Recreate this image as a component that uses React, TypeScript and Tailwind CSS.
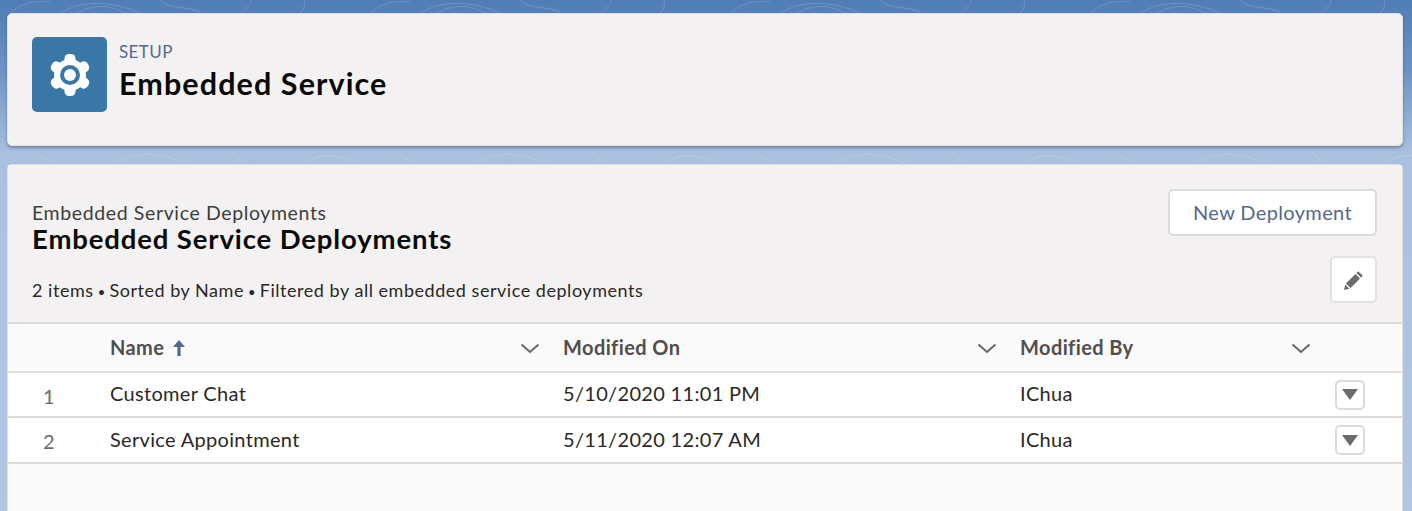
const font = "[font-family:Lato,'Noto_Sans',sans-serif]";

function Chevron() {
  return (
    <svg width="20" height="12" viewBox="0 0 20 12" fill="none" className="block">
      <path d="M1.5 2.5 L10 10 L18.5 2.5" stroke="#666" strokeWidth="2" />
    </svg>
  );
}

function HeaderCell({ label, arrow, width, chevronGap }: { label: string; arrow?: boolean; width: string; chevronGap: string }) {
  return (
    <div className={`flex items-center ${width}`}>
      <span className="-mt-[2px] text-[20px] font-bold tracking-[0.4px] text-[#514f4d]">{label}</span>
      {arrow && (
        <svg width="14" height="18" viewBox="0 0 14 18" className="ml-[8px]">
          <path d="M7 1 L13 8 L8.6 8 L8.6 17 L5.4 17 L5.4 8 L1 8 Z" fill="#54698d" />
        </svg>
      )}
      <span className={chevronGap}><Chevron /></span>
    </div>
  );
}

function Row({ n, name, date, height, shift }: { n: number; name: string; date: string; height: string; shift: string }) {
  return (
    <div className={`flex ${height} items-center border-b-2 border-[#dddbda] bg-white text-[20px] tracking-[0.32px] text-[#2b2826]`}>
      <span className="w-[102px] pl-[35px] pt-[2px] text-[#6b6b6b]">{n}</span>
      <span className={`${shift} w-[453px]`}>{name}</span>
      <span className={`${shift} w-[457px]`}>{date}</span>
      <span className={`${shift} w-[315px]`}>IChua</span>
      <button className="flex h-[30px] w-[30px] items-center justify-center rounded-[5px] border-2 border-[#dddbda] bg-white">
        <svg width="16" height="11" viewBox="0 0 16 11"><path d="M0 0 H16 L8 11 Z" fill="#6b6b6b" /></svg>
      </button>
    </div>
  );
}

function Gear() {
  return (
    <svg width="42" height="44" viewBox="0 0 42 44">
      <g fill="#ffffff">
        {[0, 60, 120, 180, 240, 300].map((a) => (
          <rect key={a} x="15.5" y="1" width="11" height="14" rx="4.5" transform={`rotate(${a} 21 22)`} />
        ))}
        <circle cx="21" cy="22" r="16" />
      </g>
      <circle cx="21" cy="22" r="10" fill="#3b77a6" />
      <circle cx="21" cy="22" r="6" fill="#f7fafc" />
    </svg>
  );
}

const contourOffsets = [0, 360, 720, 1080];

function Dot() {
  return <span className="-mx-[1px] text-[13px] tracking-normal">•</span>;
}

export default function App() {
  return (
    <div className={`relative h-[511px] w-[1412px] overflow-hidden bg-[linear-gradient(180deg,#4f7db5_0%,#6d93c4_14%,#a9c0df_30%,#b2c6e2_100%)] px-[7px] pt-[13px] ${font}`}>
      <svg className="absolute inset-0" width="1412" height="170" viewBox="0 0 1412 170" fill="none" stroke="#ffffff" strokeOpacity="0.16">
        {contourOffsets.map((x) => (
          <g key={x} transform={`translate(${x} 0)`}>
            <path d="M10 14 C20 4 30 0 50 2 M60 14 C80 -2 120 2 140 14 M76 14 C92 4 110 4 126 14 M160 0 C170 10 190 6 200 12 M240 14 C250 6 252 2 250 0 M300 14 C304 8 306 4 304 0" />
            <path d="M30 148 L60 168 M110 168 C130 150 160 150 190 166 M230 148 L246 168 M300 166 C320 152 340 152 356 166" />
          </g>
        ))}
      </svg>

      <div className="relative flex h-[133px] w-[1396px] items-start rounded-[5px] border border-[#e2e0df] bg-[#f3f1f1] pl-[24px] pt-[23px] shadow-[0_2px_3px_rgba(60,70,90,0.45)]">
        <div className="flex h-[75px] w-[75px] items-center justify-center rounded-[5px] bg-[#3b77a6]">
          <Gear />
        </div>
        <div className="ml-[12px] mt-[2px]">
          <div className="text-[17px] leading-[25px] tracking-[0.4px] text-[#54698d]">SETUP</div>
          <div className="text-[30.5px] font-bold leading-[38px] tracking-[1.1px] text-[#0a0a0a]">Embedded Service</div>
        </div>
      </div>

      <div className="relative mt-[18px] h-[361px] w-[1396px] rounded-t-[5px] border border-[#e2e0df] bg-[#fafafa]">
        <div className="relative h-[157px] bg-[#f3f1f1]">
          <div className="pl-[24px] pt-[36px]">
            <div className="text-[19.5px] leading-[23px] tracking-[0.62px] text-[#3e3e3c]">Embedded Service Deployments</div>
            <div className="text-[27.5px] font-bold leading-[30px] tracking-[0.87px] text-[#0a0a0a]">Embedded Service Deployments</div>
            <div className="mt-[24px] text-[18px] leading-[24px] tracking-[0.53px] text-[#2b2826]">
              2 items <Dot /> Sorted by Name <Dot /> Filtered by all embedded service deployments
            </div>
          </div>
          <button className="absolute right-[25px] top-[24px] h-[47px] w-[209px] rounded-[5px] border-2 border-[#dddbda] bg-white pb-[2px] text-[20px] tracking-[0.36px] text-[#54698d]">New Deployment</button>
          <button className="absolute right-[25px] top-[91px] flex h-[47px] w-[47px] items-center justify-center rounded-[5px] border-2 border-[#e3e1e0] bg-white">
            <svg width="20" height="20" viewBox="0 0 20 20">
              <path d="M14.2 1.2 L18.8 5.8 L17 7.6 L12.4 3 Z M11.4 4 L16 8.6 L6.6 18 L2 13.4 Z M1.3 14.6 L5.4 18.7 L0 20 Z" fill="#6b6b6b" />
            </svg>
          </button>
        </div>

        <div className="flex h-[51px] items-center border-y-2 border-[#dddbda] border-b-[#e3e1e0] bg-[#fafafa] pl-[102px]">
          <HeaderCell label="Name" arrow width="w-[453px]" chevronGap="ml-[334px]" />
          <HeaderCell label="Modified On" width="w-[457px]" chevronGap="ml-[297px]" />
          <HeaderCell label="Modified By" width="w-[300px]" chevronGap="ml-[157px]" />
        </div>
        <Row n={1} name="Customer Chat" date="5/10/2020 11:01 PM" height="h-[45px]" shift="-mt-[4px]" />
        <Row n={2} name="Service Appointment" date="5/11/2020 12:07 AM" height="h-[46px]" shift="-mt-[2px]" />
      </div>
    </div>
  );
}
